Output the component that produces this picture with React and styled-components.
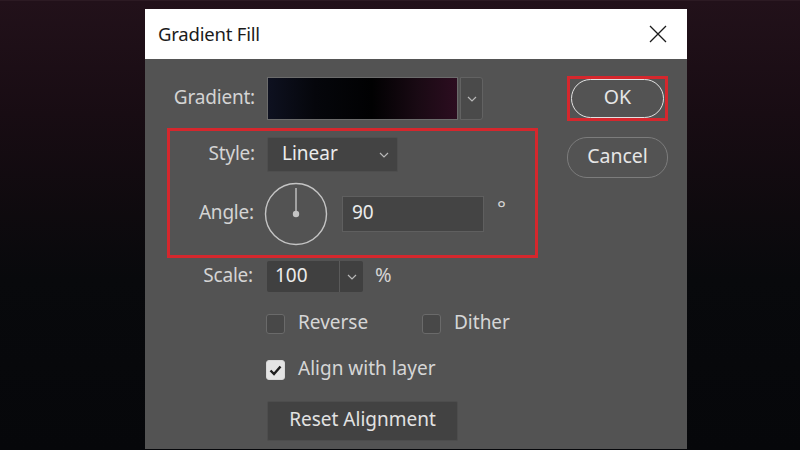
import React from "react";
import styled, { createGlobalStyle } from "styled-components";

const GlobalStyle = createGlobalStyle`
  html, body {
    margin: 0;
    padding: 0;
    width: 800px;
    height: 450px;
    overflow: hidden;
  }
  body {
    font-family: "Noto Sans", "Open Sans", sans-serif;
  }
`;

const Desktop = styled.div`
  width: 800px;
  height: 450px;
  box-sizing: border-box;
  padding: 8px 0 0 145px;
  background: linear-gradient(
    to bottom,
    #22111a 0%,
    #180c13 25%,
    #0e0a0e 48%,
    #08090c 62%,
    #06070a 100%
  );
  border-top: 1px solid #2c1a23;
`;

const Window = styled.div`
  width: 542px;
  height: 440px;
  display: flex;
  flex-direction: column;
`;

const TitleBar = styled.div`
  height: 50px;
  flex: none;
  background: #ffffff;
  display: flex;
  align-items: center;
  justify-content: space-between;
  padding: 0 20px 0 13px;
  box-sizing: border-box;
`;

const Title = styled.div`
  font-size: 18.5px;
  color: #1b1b1b;
  letter-spacing: -0.2px;
  transform: translateY(-1px);
`;

const Body = styled.div`
  flex: 1;
  background: #535353;
  display: flex;
  padding: 18px 0 0 22px;
  box-sizing: border-box;
`;

const Form = styled.div`
  width: 371px;
  display: flex;
  flex-direction: column;
`;

const Row = styled.div`
  display: flex;
  align-items: center;
  height: ${(p) => p.h}px;
  margin-top: ${(p) => p.mt || 0}px;
  padding-left: ${(p) => p.pl || 0}px;
`;

const Label = styled.div`
  width: ${(p) => p.w}px;
  flex: none;
  text-align: right;
  font-size: 19px;
  color: #d4d4d4;
  margin-right: ${(p) => p.gap}px;
  letter-spacing: -0.2px;
  transform: translateY(-2px);
`;

const Swatch = styled.div`
  width: 191px;
  height: 43px;
  box-sizing: border-box;
  border: 1px solid #6b6b6b;
  background: linear-gradient(
    to right,
    #0e1120 0%,
    #05060b 25%,
    #010102 55%,
    #1a0a14 80%,
    #2c0d20 100%
  );
`;

const SideButton = styled.div`
  width: 23px;
  height: 43px;
  margin-left: 2px;
  box-sizing: border-box;
  border: 1px solid #626262;
  border-radius: 0 3px 3px 0;
  background: #4a4a4a;
  display: flex;
  align-items: center;
  justify-content: center;
`;

const Highlight = styled.div`
  margin-top: 8px;
  width: 371px;
  height: 130px;
  box-sizing: border-box;
  border: 3px solid #d5272d;
  padding-top: 6px;
  display: flex;
  flex-direction: column;
`;

const Select = styled.div`
  width: ${(p) => p.w}px;
  height: ${(p) => p.h}px;
  box-sizing: border-box;
  background: #434343;
  border: 1px solid #4e4e4e;
  border-radius: 2px;
  display: flex;
  align-items: center;
  padding-left: ${(p) => p.pl}px;
  padding-right: 8px;
  font-size: 19px;
  color: #ececec;
`;

const Text = styled.span`
  flex: ${(p) => (p.grow ? 1 : "none")};
  transform: translateY(-2px);
`;

const Field = styled.div`
  width: 142px;
  height: 36px;
  margin-left: 14px;
  box-sizing: border-box;
  background: #444444;
  border: 1px solid #5f5f5f;
  display: flex;
  align-items: center;
  padding-left: 9px;
  font-size: 19px;
  color: #ececec;
`;

const Unit = styled.div`
  font-size: ${(p) => p.size || 19}px;
  color: #d4d4d4;
  margin-left: ${(p) => p.ml}px;
  position: relative;
  top: ${(p) => p.dy || 0}px;
`;

const Combo = styled.div`
  width: 96px;
  height: 31px;
  display: flex;
  box-sizing: border-box;
  background: #404040;
  border-radius: 2px;
`;

const ComboText = styled.div`
  width: 73px;
  display: flex;
  align-items: center;
  padding-left: 8px;
  box-sizing: border-box;
  font-size: 19px;
  color: #ececec;
  border-right: 1px solid #5a5a5a;
`;

const ComboArrow = styled.div`
  flex: 1;
  display: flex;
  align-items: center;
  justify-content: center;
`;

const CheckItem = styled.div`
  display: flex;
  align-items: center;
  width: ${(p) => p.w || "auto"};
  font-size: 19px;
  color: #d6d6d6;
`;

const Box = styled.div`
  width: 19px;
  height: 20px;
  flex: none;
  box-sizing: border-box;
  border-radius: 3px;
  margin-right: 13px;
  border: 1px solid ${(p) => (p.checked ? "#d8d8d8" : "#6a6a6a")};
  background: ${(p) => (p.checked ? "#e4e4e4" : "#484848")};
  display: flex;
  align-items: center;
  justify-content: center;
`;

const ResetButton = styled.div`
  margin-top: 21px;
  margin-left: 100px;
  width: 191px;
  height: 40px;
  box-sizing: border-box;
  background: #424242;
  border: 1px solid #4d4d4d;
  border-radius: 2px;
  display: flex;
  align-items: center;
  justify-content: center;
  font-size: 19px;
  color: #e2e2e2;
`;

const Actions = styled.div`
  margin-left: 29px;
  margin-top: -1px;
  display: flex;
  flex-direction: column;
`;

const Focus = styled.div`
  width: 101px;
  height: 45px;
  box-sizing: border-box;
  border: 3px solid #d5272d;
  padding: 0 1px;
  display: flex;
  align-items: center;
`;

const Pill = styled.div`
  width: ${(p) => p.w}px;
  height: ${(p) => p.h}px;
  box-sizing: border-box;
  border-radius: 20px;
  border: 1.5px solid ${(p) => (p.primary ? "#e2e2e2" : "#7c7c7c")};
  display: flex;
  align-items: center;
  justify-content: center;
  font-size: 19.5px;
  color: #e6e6e6;
  margin-top: ${(p) => p.mt || 0}px;
`;

const Chevron = ({ color = "#b8b8b8" }) => (
  <svg width="10" height="6" viewBox="0 0 10 6">
    <path d="M1 1 L5 5 L9 1" fill="none" stroke={color} strokeWidth="1.2" />
  </svg>
);

const CloseIcon = () => (
  <svg width="18" height="18" viewBox="0 0 18 18">
    <path d="M1 1 L17 17 M17 1 L1 17" stroke="#1b1b1b" strokeWidth="1.3" />
  </svg>
);

const Dial = () => (
  <svg width="64" height="64" viewBox="0 0 64 64">
    <circle cx="32" cy="32" r="30.5" fill="none" stroke="#c4c4c4" strokeWidth="1.4" />
    <line x1="32" y1="32" x2="32" y2="6" stroke="#c4c4c4" strokeWidth="1.4" />
    <circle cx="32" cy="32" r="3.2" fill="#c4c4c4" />
  </svg>
);

const Check = () => (
  <svg width="13" height="11" viewBox="0 0 13 11">
    <path d="M1.5 5.5 L5 9 L11.5 1.5" fill="none" stroke="#1e1e1e" strokeWidth="2.4" />
  </svg>
);

const App = () => {
  return (
    <>
      <GlobalStyle />
      <Desktop>
        <Window>
          <TitleBar>
            <Title>Gradient Fill</Title>
            <CloseIcon />
          </TitleBar>
          <Body>
            <Form>
              <Row h={43}>
                <Label w={88} gap={12}>Gradient:</Label>
                <Swatch />
                <SideButton>
                  <Chevron />
                </SideButton>
              </Row>
              <Highlight>
                <Row h={35}>
                  <Label w={85} gap={12}>Style:</Label>
                  <Select w={131} h={35} pl={14}>
                    <Text grow>Linear</Text>
                    <Chevron />
                  </Select>
                </Row>
                <Row h={62} mt={11}>
                  <Label w={84} gap={10}>Angle:</Label>
                  <Dial />
                  <Field>
                    <Text>90</Text>
                  </Field>
                  <Unit ml={13} dy={-6} size={21}>°</Unit>
                </Row>
              </Highlight>
              <Row h={31} mt={3}>
                <Label w={86} gap={14}>Scale:</Label>
                <Combo>
                  <ComboText>
                    <Text>100</Text>
                  </ComboText>
                  <ComboArrow>
                    <Chevron />
                  </ComboArrow>
                </Combo>
                <Unit ml={12} dy={-2} size={20}>%</Unit>
              </Row>
              <Row h={20} mt={22} pl={99}>
                <CheckItem w="156px">
                  <Box />
                  <Text>Reverse</Text>
                </CheckItem>
                <CheckItem>
                  <Box />
                  <Text>Dither</Text>
                </CheckItem>
              </Row>
              <Row h={20} mt={26} pl={99}>
                <CheckItem>
                  <Box checked>
                    <Check />
                  </Box>
                  <Text>Align with layer</Text>
                </CheckItem>
              </Row>
              <ResetButton>
                <Text>Reset Alignment</Text>
              </ResetButton>
            </Form>
            <Actions>
              <Focus>
                <Pill w={93} h={39} primary>
                  <Text>OK</Text>
                </Pill>
              </Focus>
              <Pill w={101} h={41} mt={16}>
                <Text>Cancel</Text>
              </Pill>
            </Actions>
          </Body>
        </Window>
      </Desktop>
    </>
  );
};

export default App;
